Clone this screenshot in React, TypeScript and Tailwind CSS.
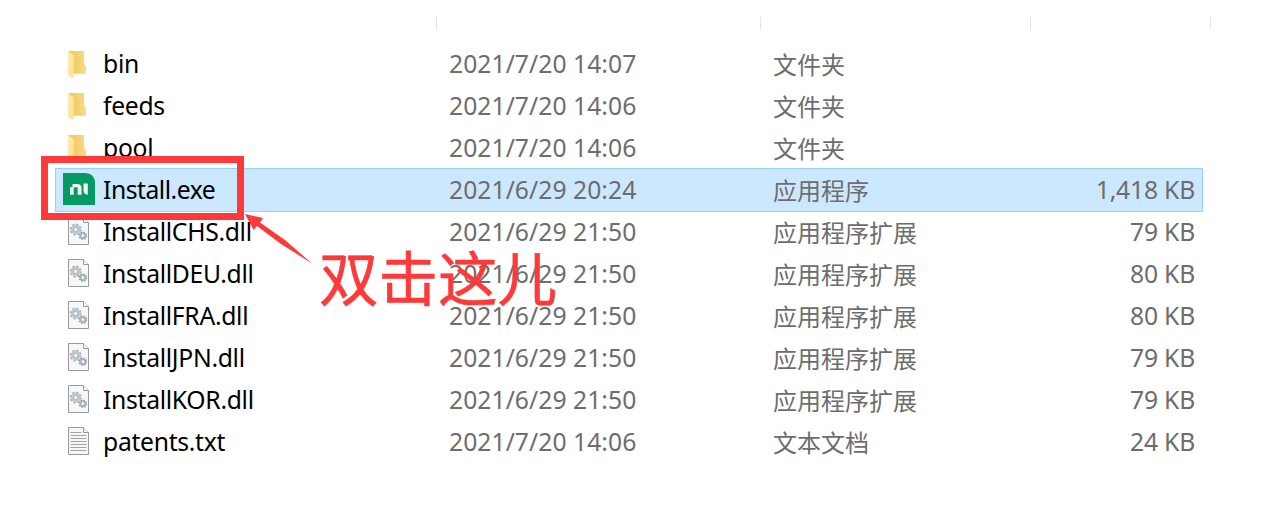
import clsx from "clsx";

type Kind = "folder" | "exe" | "dll" | "txt";

const files: { name: string; date: string; type: string; size?: string; kind: Kind }[] = [
  { name: "bin", date: "2021/7/20 14:07", type: "文件夹", kind: "folder" },
  { name: "feeds", date: "2021/7/20 14:06", type: "文件夹", kind: "folder" },
  { name: "pool", date: "2021/7/20 14:06", type: "文件夹", kind: "folder" },
  { name: "Install.exe", date: "2021/6/29 20:24", type: "应用程序", size: "1,418 KB", kind: "exe" },
  { name: "InstallCHS.dll", date: "2021/6/29 21:50", type: "应用程序扩展", size: "79 KB", kind: "dll" },
  { name: "InstallDEU.dll", date: "2021/6/29 21:50", type: "应用程序扩展", size: "80 KB", kind: "dll" },
  { name: "InstallFRA.dll", date: "2021/6/29 21:50", type: "应用程序扩展", size: "80 KB", kind: "dll" },
  { name: "InstallJPN.dll", date: "2021/6/29 21:50", type: "应用程序扩展", size: "79 KB", kind: "dll" },
  { name: "InstallKOR.dll", date: "2021/6/29 21:50", type: "应用程序扩展", size: "79 KB", kind: "dll" },
  { name: "patents.txt", date: "2021/7/20 14:06", type: "文本文档", size: "24 KB", kind: "txt" },
];

function FolderIcon() {
  return (
    <svg width="24" height="30" viewBox="0 0 24 30">
      <defs>
        <linearGradient id="back" x1="0" x2="1">
          <stop offset="0.3" stopColor="#f0cb69" />
          <stop offset="1" stopColor="#fbdc80" />
        </linearGradient>
        <linearGradient id="flap" x1="0" x2="1" y2="1">
          <stop offset="0" stopColor="#ffedaf" />
          <stop offset="1" stopColor="#fddf8b" />
        </linearGradient>
      </defs>
      <path d="M1 2H17V15L19 17V24.7H6Z" fill="url(#back)" />
      <path d="M1 2L7 6.5V24.5L6 29.3L1 26Z" fill="url(#flap)" />
    </svg>
  );
}

function ExeIcon() {
  return (
    <svg width="32" height="32" viewBox="0 0 32 32">
      <path d="M0 0H22C28 0 32 4 32 10V32H0Z" fill="#049a63" />
      <path d="M7 14H9.500V11H14Q18.500 11 18.500 15V21.700H14.700V14.300H10.700V21.700H7Z" fill="#f4f4f0" />
      <path d="M20.500 10.500H24.800V21.700Q20.500 21.500 20.500 17.500Z" fill="#f4f4f0" />
    </svg>
  );
}

function DocIcon({ lines }: { lines?: boolean }) {
  return (
    <svg width="24" height="30" viewBox="0 0 24 30">
      <path d="M1.500.5H16.500L21.500 5.500V27.500H1.500Z" fill="#f7f7f7" stroke="#999" />
      <path d="M16.500.5V5.500H21.500" fill="#fff" stroke="#999" />
      {lines ? (
        <path
          d="M3.500 5.500H14.500M3.500 8.500H19.500M3.500 11.500H19.500M3.500 14.500H19.500M3.500 17.500H19.500M3.500 20.500H19.500M3.500 23.500H19.500"
          stroke="#a5a5a5"
        />
      ) : (
        <g fill="none">
          <circle cx="8.700" cy="12.500" r="3.500" stroke="#bec8ce" strokeWidth="2.800" />
          <circle cx="8.700" cy="12.500" r="5.300" stroke="#a3afb7" strokeWidth="1.400" strokeDasharray="2.080 2.080" />
          <circle cx="8.700" cy="12.500" r="2.100" stroke="#94a1aa" strokeWidth="0.600" />
          <circle cx="15.900" cy="18.700" r="2.400" stroke="#a9b5bc" strokeWidth="2" />
          <circle cx="15.900" cy="18.700" r="3.700" stroke="#84929b" strokeWidth="1.100" strokeDasharray="1.450 1.450" />
        </g>
      )}
    </svg>
  );
}

function FileIcon({ kind }: { kind: Kind }) {
  if (kind === "folder") return <FolderIcon />;
  if (kind === "exe") return <ExeIcon />;
  return <DocIcon lines={kind === "txt"} />;
}

export default function App() {
  return (
    <main className="relative h-[511px] w-[1275px] overflow-hidden bg-white font-['Noto_Sans','Noto_Sans_CJK_SC',sans-serif] text-[24.7px] leading-[42px] text-[#6d6d6d]">
      {/* column separators */}
      <div className="grid h-[43px] grid-cols-[437px_324px_270px_180px] pt-[17px]">
        {[0, 1, 2, 3].map((i) => (
          <div key={i} className="h-[13px] border-r border-[#e5e5e5]" />
        ))}
      </div>

      <ul className="ml-[56px] w-[1146px]">
        {files.map((file) => (
          <li
            key={file.name}
            className={clsx(
              "grid h-[42px] grid-cols-[47px_346px_324px_1fr] grid-rows-[42px] whitespace-nowrap pr-[7px]",
              file.kind === "exe" && "bg-[#cce8ff] outline outline-[#99d1ff]"
            )}
          >
            <span className={clsx("flex items-center", file.kind === "exe" ? "-mt-0.5 pl-[7px]" : "pl-[11px]")}>
              <FileIcon kind={file.kind} />
            </span>
            <span className={clsx("text-black", file.kind === "exe" ? "tracking-[-0.48px]" : "tracking-[-0.3px]")}>
              {file.name}
            </span>
            <span className="tracking-[0.04px]">{file.date}</span>
            <span className="flex justify-between">
              <span className="pt-px text-2xl/[42px]">{file.type}</span>
              <span className="tracking-[-0.2px]">{file.size}</span>
            </span>
          </li>
        ))}
      </ul>

      {/* red annotation: frame, arrow and note */}
      <div className="absolute left-[41px] top-[156px] h-16 w-[203px] border-[7px] border-[#fd3939]" />
      <svg className="absolute left-[244px] top-[213px]" width="70" height="53" viewBox="244 213 70 53">
        <path d="M245 214L263 218L260 222.500L285 240L312 263.500L281 244L257 226L253.500 230Z" fill="#fd3939" />
      </svg>
      <p className="absolute left-[319px] top-[246px] whitespace-nowrap font-['Noto_Sans_CJK_SC',sans-serif] text-[59.5px]/[59px] text-[#fd3939] [-webkit-text-stroke:0.6px_#fd3939]">
        双击这儿
      </p>
    </main>
  );
}
